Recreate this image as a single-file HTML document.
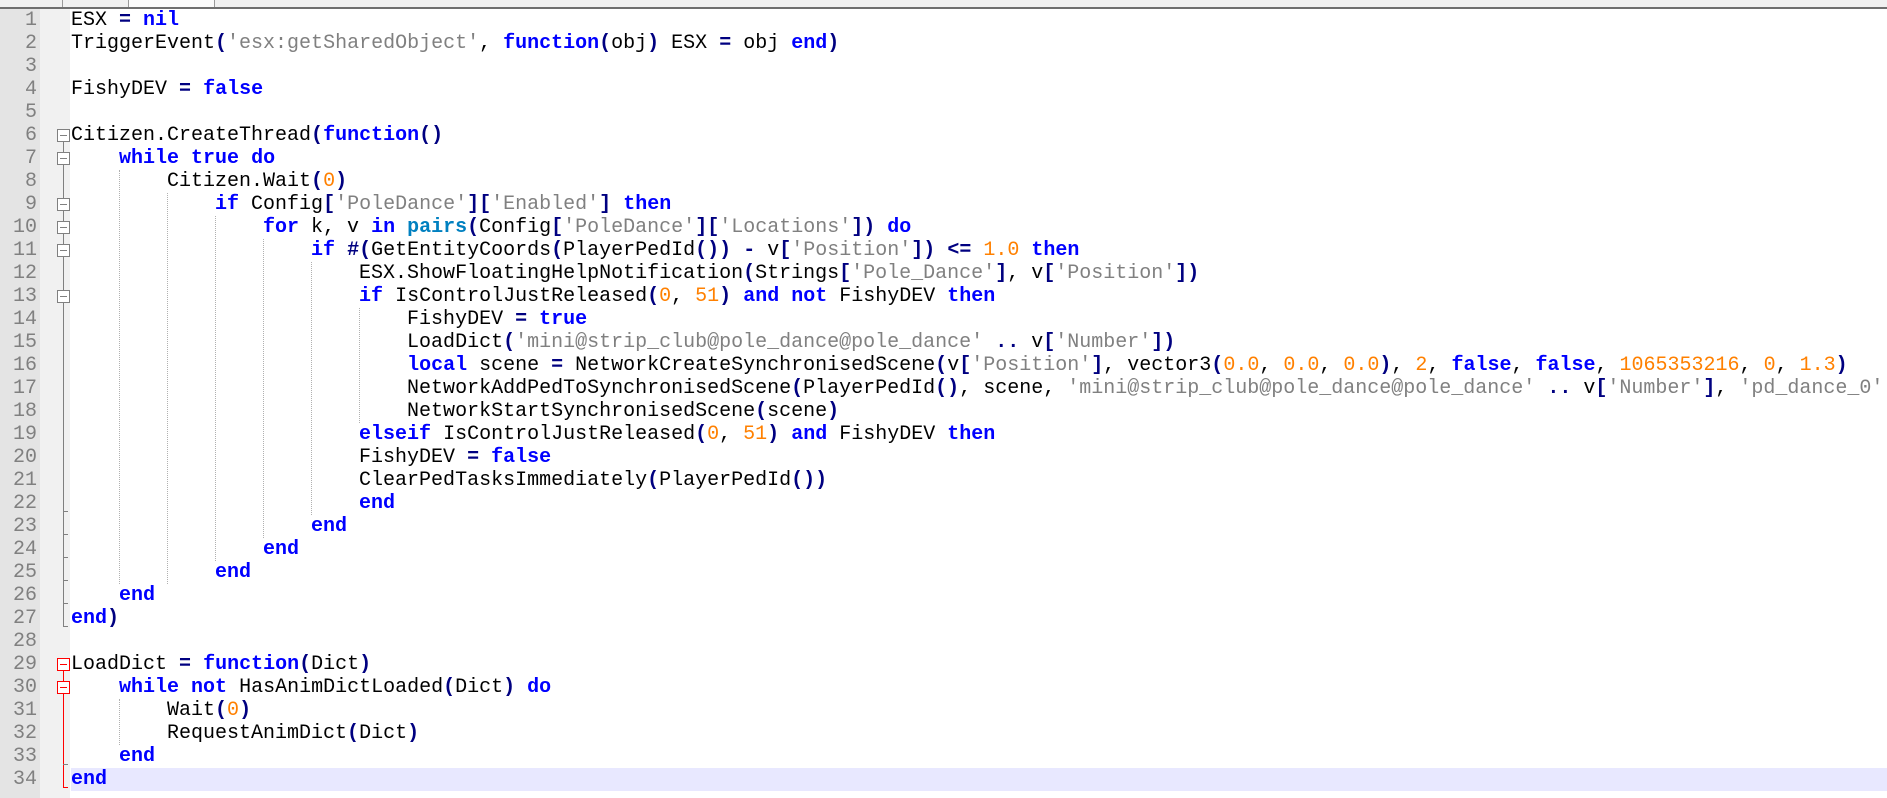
<!DOCTYPE html>
<html><head><meta charset="utf-8"><style>
html,body{margin:0;padding:0;width:1887px;height:798px;overflow:hidden;background:#fff;}
#tabs{position:absolute;left:0;top:0;width:1887px;height:7px;background:#f0f0f0;border-bottom:2px solid #6e6e6e;}
.tab{position:absolute;top:0;height:7px;border-right:1px solid #999;}
#ln{position:absolute;left:0;top:9px;width:40px;height:789px;background:#e4e4e4;}
#fm{position:absolute;left:40px;top:9px;width:30px;height:789px;background:#f1f1f1;}
.num{position:absolute;left:0;width:37px;text-align:right;font:20px "Liberation Mono",monospace;color:#808080;height:23px;line-height:23px;}
.l{position:absolute;left:71px;height:23px;line-height:23px;font:20px "Liberation Mono",monospace;white-space:pre;color:#000;}
.k{color:#0000ff;font-weight:bold}
.s{color:#808080}
.n{color:#ff8000}
.o{color:#000080;font-weight:bold}
.f{color:#0080c0;font-weight:bold}
.g{position:absolute;width:0;border-left:1px dotted #b0b0b0;}
.box{position:absolute;left:57px;width:13px;height:13px;border:1px solid #808080;background:#fff;box-sizing:border-box;}
.box:after{content:"";position:absolute;left:2px;top:5px;width:7px;height:1px;background:#808080;}
.box.r{border-color:#f00}
.box.r:after{background:#f00}
.vl{position:absolute;left:63px;width:1px;background:#808080;}
.tk{position:absolute;left:63px;width:5px;height:1px;background:#808080;}
#cur{position:absolute;left:71px;top:768px;width:1816px;height:23px;background:#e8e8ff;}
</style></head><body>
<div id="tabs"><div class="tab" style="left:0;width:62px"></div><div class="tab" style="left:63px;width:65px"></div><div class="tab" style="left:129px;width:85px;background:#fafafa"></div></div>
<div id="ln"></div><div id="fm"></div>
<div id="cur"></div>

<div class="num" style="top:9px">1</div><div class="num" style="top:32px">2</div><div class="num" style="top:55px">3</div><div class="num" style="top:78px">4</div><div class="num" style="top:101px">5</div><div class="num" style="top:124px">6</div><div class="num" style="top:147px">7</div><div class="num" style="top:170px">8</div><div class="num" style="top:193px">9</div><div class="num" style="top:216px">10</div><div class="num" style="top:239px">11</div><div class="num" style="top:262px">12</div><div class="num" style="top:285px">13</div><div class="num" style="top:308px">14</div><div class="num" style="top:331px">15</div><div class="num" style="top:354px">16</div><div class="num" style="top:377px">17</div><div class="num" style="top:400px">18</div><div class="num" style="top:423px">19</div><div class="num" style="top:446px">20</div><div class="num" style="top:469px">21</div><div class="num" style="top:492px">22</div><div class="num" style="top:515px">23</div><div class="num" style="top:538px">24</div><div class="num" style="top:561px">25</div><div class="num" style="top:584px">26</div><div class="num" style="top:607px">27</div><div class="num" style="top:630px">28</div><div class="num" style="top:653px">29</div><div class="num" style="top:676px">30</div><div class="num" style="top:699px">31</div><div class="num" style="top:722px">32</div><div class="num" style="top:745px">33</div><div class="num" style="top:768px">34</div>

<div class="vl" style="top:140px;height:487px"></div>
<div class="tk" style="top:511px"></div><div class="tk" style="top:534px"></div><div class="tk" style="top:557px"></div><div class="tk" style="top:580px"></div><div class="tk" style="top:603px"></div><div class="tk" style="top:626px"></div>
<div class="box" style="top:129px"></div><div class="box" style="top:152px"></div><div class="box" style="top:198px"></div><div class="box" style="top:221px"></div><div class="box" style="top:244px"></div><div class="box" style="top:290px"></div>
<div class="vl" style="top:670px;height:117px;background:#f00"></div>
<div class="tk" style="top:787px;background:#f00"></div>
<div class="tk" style="top:764px"></div>
<div class="box r" style="top:658px"></div><div class="box r" style="top:681px"></div>

<div class="g" style="left:119px;top:170px;height:414px"></div>
<div class="g" style="left:167px;top:193px;height:391px"></div>
<div class="g" style="left:215px;top:216px;height:345px"></div>
<div class="g" style="left:263px;top:239px;height:299px"></div>
<div class="g" style="left:311px;top:262px;height:253px"></div>
<div class="g" style="left:359px;top:308px;height:115px"></div>
<div class="g" style="left:119px;top:699px;height:46px"></div>

<div class="l" style="top:9px">ESX <span class="o">=</span> <span class="k">nil</span></div>
<div class="l" style="top:32px">TriggerEvent<span class="o">(</span><span class="s">'esx:getSharedObject'</span>, <span class="k">function</span><span class="o">(</span>obj<span class="o">)</span> ESX <span class="o">=</span> obj <span class="k">end</span><span class="o">)</span></div>
<div class="l" style="top:78px">FishyDEV <span class="o">=</span> <span class="k">false</span></div>
<div class="l" style="top:124px">Citizen.CreateThread<span class="o">(</span><span class="k">function</span><span class="o">()</span></div>
<div class="l" style="top:147px">    <span class="k">while</span> <span class="k">true</span> <span class="k">do</span></div>
<div class="l" style="top:170px">        Citizen.Wait<span class="o">(</span><span class="n">0</span><span class="o">)</span></div>
<div class="l" style="top:193px">            <span class="k">if</span> Config<span class="o">[</span><span class="s">'PoleDance'</span><span class="o">][</span><span class="s">'Enabled'</span><span class="o">]</span> <span class="k">then</span></div>
<div class="l" style="top:216px">                <span class="k">for</span> k, v <span class="k">in</span> <span class="f">pairs</span><span class="o">(</span>Config<span class="o">[</span><span class="s">'PoleDance'</span><span class="o">][</span><span class="s">'Locations'</span><span class="o">])</span> <span class="k">do</span></div>
<div class="l" style="top:239px">                    <span class="k">if</span> <span class="o">#(</span>GetEntityCoords<span class="o">(</span>PlayerPedId<span class="o">())</span> <span class="o">-</span> v<span class="o">[</span><span class="s">'Position'</span><span class="o">])</span> <span class="o">&lt;=</span> <span class="n">1.0</span> <span class="k">then</span></div>
<div class="l" style="top:262px">                        ESX.ShowFloatingHelpNotification<span class="o">(</span>Strings<span class="o">[</span><span class="s">'Pole_Dance'</span><span class="o">]</span>, v<span class="o">[</span><span class="s">'Position'</span><span class="o">])</span></div>
<div class="l" style="top:285px">                        <span class="k">if</span> IsControlJustReleased<span class="o">(</span><span class="n">0</span>, <span class="n">51</span><span class="o">)</span> <span class="k">and</span> <span class="k">not</span> FishyDEV <span class="k">then</span></div>
<div class="l" style="top:308px">                            FishyDEV <span class="o">=</span> <span class="k">true</span></div>
<div class="l" style="top:331px">                            LoadDict<span class="o">(</span><span class="s">'mini@strip_club@pole_dance@pole_dance'</span> <span class="o">..</span> v<span class="o">[</span><span class="s">'Number'</span><span class="o">])</span></div>
<div class="l" style="top:354px">                            <span class="k">local</span> scene <span class="o">=</span> NetworkCreateSynchronisedScene<span class="o">(</span>v<span class="o">[</span><span class="s">'Position'</span><span class="o">]</span>, vector3<span class="o">(</span><span class="n">0.0</span>, <span class="n">0.0</span>, <span class="n">0.0</span><span class="o">)</span>, <span class="n">2</span>, <span class="k">false</span>, <span class="k">false</span>, <span class="n">1065353216</span>, <span class="n">0</span>, <span class="n">1.3</span><span class="o">)</span></div>
<div class="l" style="top:377px">                            NetworkAddPedToSynchronisedScene<span class="o">(</span>PlayerPedId<span class="o">()</span>, scene, <span class="s">'mini@strip_club@pole_dance@pole_dance'</span> <span class="o">..</span> v<span class="o">[</span><span class="s">'Number'</span><span class="o">]</span>, <span class="s">'pd_dance_0'</span></div>
<div class="l" style="top:400px">                            NetworkStartSynchronisedScene<span class="o">(</span>scene<span class="o">)</span></div>
<div class="l" style="top:423px">                        <span class="k">elseif</span> IsControlJustReleased<span class="o">(</span><span class="n">0</span>, <span class="n">51</span><span class="o">)</span> <span class="k">and</span> FishyDEV <span class="k">then</span></div>
<div class="l" style="top:446px">                        FishyDEV <span class="o">=</span> <span class="k">false</span></div>
<div class="l" style="top:469px">                        ClearPedTasksImmediately<span class="o">(</span>PlayerPedId<span class="o">())</span></div>
<div class="l" style="top:492px">                        <span class="k">end</span></div>
<div class="l" style="top:515px">                    <span class="k">end</span></div>
<div class="l" style="top:538px">                <span class="k">end</span></div>
<div class="l" style="top:561px">            <span class="k">end</span></div>
<div class="l" style="top:584px">    <span class="k">end</span></div>
<div class="l" style="top:607px"><span class="k">end</span><span class="o">)</span></div>
<div class="l" style="top:653px">LoadDict <span class="o">=</span> <span class="k">function</span><span class="o">(</span>Dict<span class="o">)</span></div>
<div class="l" style="top:676px">    <span class="k">while</span> <span class="k">not</span> HasAnimDictLoaded<span class="o">(</span>Dict<span class="o">)</span> <span class="k">do</span></div>
<div class="l" style="top:699px">        Wait<span class="o">(</span><span class="n">0</span><span class="o">)</span></div>
<div class="l" style="top:722px">        RequestAnimDict<span class="o">(</span>Dict<span class="o">)</span></div>
<div class="l" style="top:745px">    <span class="k">end</span></div>
<div class="l" style="top:768px"><span class="k">end</span></div>
</body></html>
